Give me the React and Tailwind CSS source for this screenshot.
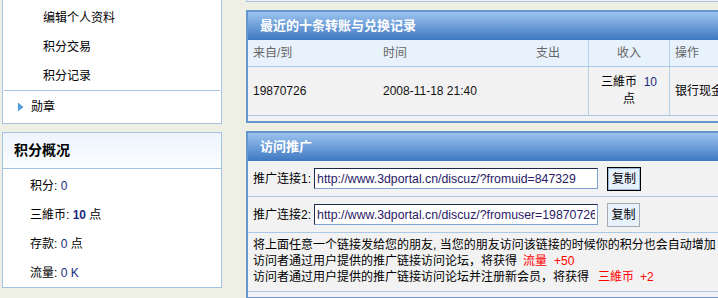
const LINK1 = 'http://www.3dportal.cn/discuz/?fromuid=847329';
const LINK2 = 'http://www.3dportal.cn/discuz/?fromuser=19870726';

function SideMenu() {
  return (
    <div className="h-[124px] border-x border-b border-[#a5c4e4] bg-white pt-[3px]">
      {['编辑个人资料', '积分交易', '积分记录'].map((t) => (
        <div key={t} className="flex h-[29px] items-center pl-[40px]">
          {t}
        </div>
      ))}
      <div className="mx-[1px] h-px bg-[#a5c4e4]" />
      <div className="flex h-[32px] items-center pl-[15px]">
        <svg width="5" height="8" viewBox="0 0 5 8" className="mr-[8px]">
          <polygon points="0,0 5,4 0,8" fill="#58a4e2" />
          <polygon points="0,0 5,4 0,8" fill="none" stroke="#2f7fc8" strokeWidth="0.6" />
        </svg>
        勋章
      </div>
    </div>
  );
}

function CreditSummary() {
  const val = 'text-[#1b2a80]';
  return (
    <div className="mt-[8px] border border-[#a5c4e4] bg-white">
      <div className="flex h-[36px] items-center border-b border-[#a5c4e4] bg-gradient-to-b from-[#edf4fd] to-[#fbfdff] pl-[11px] text-[14px] font-bold">
        积分概况
      </div>
      <div className="pt-[2px]">
        <div className="flex h-[29px] items-center pl-[27px]">
          积分:&nbsp;<span className={val}>0</span>
        </div>
        <div className="flex h-[29px] items-center pl-[27px]">
          三維币:&nbsp;<b className={val}>10</b>&nbsp;点
        </div>
        <div className="flex h-[29px] items-center pl-[27px]">
          存款:&nbsp;<span className={val}>0</span>&nbsp;点
        </div>
        <div className="flex h-[29px] items-center pl-[27px]">
          流量:&nbsp;<span className={val}>0 K</span>
        </div>
      </div>
    </div>
  );
}

function PanelHead({ children }) {
  return (
    <div className="flex h-[28px] items-center bg-gradient-to-b from-[#9cc3ee] to-[#3e78c2] pl-[12px] text-[13px] font-bold text-white">
      {children}
    </div>
  );
}

function Records() {
  return (
    <div className="mt-[8px] border-2 border-[#6796cf] bg-[#f2f2f2] pb-[5px]">
      <PanelHead>最近的十条转账与兑换记录</PanelHead>
      <div className="flex h-[27px] border-b border-[#a9c9e8] bg-[#e8f2fc] text-[#666]">
        <div className="flex w-[130px] items-center pl-[5px]">来自/到</div>
        <div className="flex w-[130px] items-center pl-[5px]">时间</div>
        <div className="flex w-[80px] items-center justify-center">支出</div>
        <div className="flex w-[81px] items-center justify-center border-l border-[#b4cfe8]">收入</div>
        <div className="flex w-[120px] items-center border-l border-[#b4cfe8] pl-[5px]">操作</div>
      </div>
      <div className="flex h-[49px] border-b border-[#a9c9e8] text-[#111]">
        <div className="flex w-[130px] items-center pl-[5px]">19870726</div>
        <div className="flex w-[130px] items-center pl-[5px]">2008-11-18 21:40</div>
        <div className="w-[80px]" />
        <div className="flex w-[81px] flex-col items-center justify-center border-l border-[#b4cfe8] leading-[17px] text-black">
          <div>
            三維币&nbsp;&nbsp;<span className="text-[#1b2a80]">10</span>
          </div>
          <div>点</div>
        </div>
        <div className="flex w-[120px] items-center whitespace-nowrap border-l border-[#b4cfe8] pl-[5px] text-black">
          银行现金转账
        </div>
      </div>
    </div>
  );
}

function CopyButton({ focused }) {
  return (
    <button
      type="button"
      className={
        focused
          ? 'ml-[9px] h-[24px] w-[34px] border border-black bg-[#e6f0fb] text-[12px] shadow-[inset_0_0_0_1px_#9fb9d8]'
          : 'ml-[9px] h-[24px] w-[33px] border border-[#a3abb5] bg-[#e6f1fc] text-[12px]'
      }
    >
      复制
    </button>
  );
}

function LinkRow({ n, link, focused }) {
  return (
    <div className="flex h-[36px] items-center border-b border-[#a9c9e8] pl-[5px]">
      <span>推广连接{n}:</span>
      <input
        readOnly
        value={link}
        className="ml-[3px] h-[21px] w-[284px] border border-t-[#1e2a47] border-l-[#1e2a47] border-r-[#7ea3d3] border-b-[#7ea3d3] bg-white px-[2px] text-[12.3px] text-[#2b1a66] outline-none"
      />
      <CopyButton focused={focused} />
    </div>
  );
}

function Promotion() {
  return (
    <div className="mt-[8px] border-2 border-[#6796cf] bg-[#f2f2f2] pb-[5px]">
      <PanelHead>访问推广</PanelHead>
      <LinkRow n={1} link={LINK1} focused />
      <LinkRow n={2} link={LINK2} />
      <div className="h-[59px] whitespace-nowrap border-b border-[#a9c9e8] px-[5px] pt-[4px] leading-[16px]">
        <div>将上面任意一个链接发给您的朋友, 当您的朋友访问该链接的时候你的积分也会自动增加</div>
        <div>
          访问者通过用户提供的推广链接访问论坛，将获得
          <span className="ml-[6px] text-[#f00]">流量</span>
          <span className="ml-[7px] text-[#f00]">+50</span>
        </div>
        <div>
          访问者通过用户提供的推广链接访问论坛并注册新会员，将获得
          <span className="ml-[9px] text-[#f00]">三維币</span>
          <span className="ml-[6px] text-[#f00]">+2</span>
        </div>
      </div>
    </div>
  );
}

export default function App() {
  return (
    <div className="flex h-[298px] w-[718px] items-start overflow-hidden bg-[#eef0e6] font-['Liberation_Sans','Noto_Sans_CJK_SC',sans-serif] text-[12px] text-black">
      <div className="ml-[2px] w-[220px] shrink-0">
        <SideMenu />
        <CreditSummary />
      </div>
      <div className="ml-[24px] w-[560px] shrink-0">
        <div className="h-[2px] border-b border-l border-[#a5c4e4] bg-[#f2f2f2]" />
        <Records />
        <Promotion />
      </div>
    </div>
  );
}
